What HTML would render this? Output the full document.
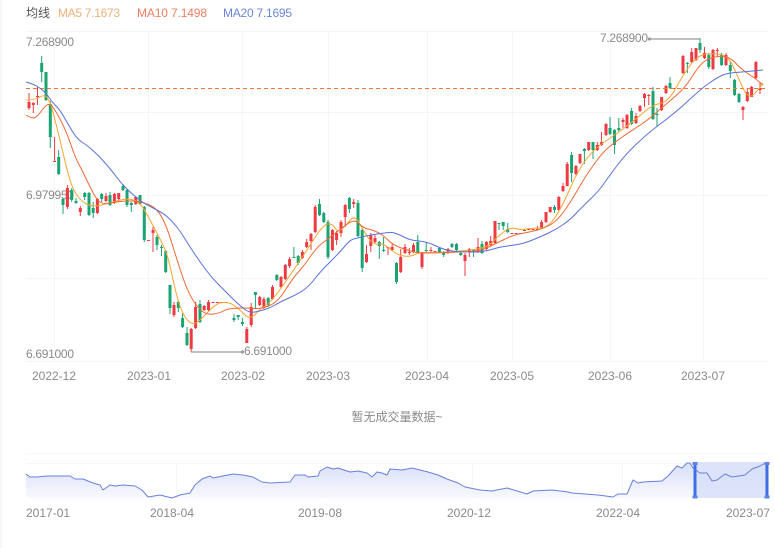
<!DOCTYPE html>
<html><head><meta charset="utf-8">
<style>
html,body{margin:0;padding:0;background:#fff;width:775px;height:548px;overflow:hidden}
svg{display:block;filter:blur(.3px)}
text{font-family:"Liberation Sans","Noto Sans CJK SC",sans-serif;font-size:12px;fill:#8a8a8a}
</style></head><body>
<svg width="775" height="548" viewBox="0 0 775 548" xmlns="http://www.w3.org/2000/svg">
<defs>
<linearGradient id="a" x1="0" y1="0" x2="0" y2="1"><stop offset="0" stop-color="#c9d3f5"/><stop offset="1" stop-color="#f7f8fe"/></linearGradient>
<linearGradient id="s" x1="0" y1="0" x2="0" y2="1"><stop offset="0" stop-color="#d6def9"/><stop offset="1" stop-color="#d9e0f9"/></linearGradient>
</defs>
<rect x="0" y="0" width="2" height="548" fill="#f8f8f8"/>
<path d="M26 31.5H768M26 112.5H768M26 195.5H768M26 278.5H768M26 361.5H768M54.5 31V361M148.5 31V361M242.5 31V361M328.5 31V361M427.5 31V361M512.5 31V361M610.5 31V361M703.5 31V361" stroke="#f5f5f5" fill="none"/>

<text x="26" y="17" style="fill:#555">均线</text>
<text x="58" y="17" textLength="62" style="fill:#edb27c">MA5 7.1673</text>
<text x="137" y="17" textLength="70" style="fill:#ee7f5f">MA10 7.1498</text>
<text x="223" y="17" textLength="69" style="fill:#6d86dc">MA20 7.1695</text>

<text x="26" y="46" textLength="48">7.268900</text>
<text x="26" y="199" textLength="48">6.979950</text>
<text x="26" y="358" textLength="48">6.691000</text>

<g stroke="#ee3b43" stroke-width="1" fill="none">
<path d="M29 93V110M33.3 102V113M37.5 87V105M54.6 137V162M67.4 185V209M80.3 206V216M97.4 198V214M106 193V202M114.4 193V204M118.7 193V202M135.8 196V205M148.6 240V241M153 227V252M174 302V317M191.2 328V352M195.6 302V329M204.2 305V311M208.5 300V311M246.8 327V343M251.2 303V327M259.7 296V306M263.9 297V309M272.5 285V300M281 276V288M285.3 264V280M289.6 257V268M302.4 250V259M306.7 239V248M311 233V250M315.2 205V233M332.4 229V251M336.6 231V245M341 220V237M345.2 204V227M353.7 199V208M366.5 245V263M370.8 233V252M375 235V243M388 247V255M392.2 244V251M400.7 249V273M405 244V254M409.3 248V255M413.5 243V253M422 252V269M431 247V252M435 251V252M448 248V254M465 253V276M469.3 248V257M478 238V253M486.4 241V250M490.7 236V246M495 221V244M512 233V234M516.2 233V234M520.5 233V234M524.5 229V231M528.8 229V230M533 229V230M537.4 226V230M541.6 220V229M546 212V223M550.2 207V213M558.8 196V211M563 183V192M567.2 162V186M575.9 165V175M580 154V164M588.7 142V151M597.3 142V151M601.6 132V146M606 123V136M623 118V128M627 114V129M636 113V124M640 105V112M644.5 93V107M648.8 94V105M661.6 97V111M666 85V94M683 55V74M691.7 48V63M696 48V61M704.5 47V59M713 49V70M717.3 48V57M726 53V66M743 106V120M747.3 88V102M751.6 86V97M755.9 61V79M760 82V94"/>
</g>
<g stroke="#ee3b43" stroke-width="3" fill="none">
<path d="M29 102V108M33.3 103V105M37.5 96V97M54.6 161V162M67.4 188V207M80.3 208V212M97.4 199V213M106 196V201M114.4 194V203M118.7 193V199M135.8 197V204M148.6 240V241M153 230V233M174 305V315M191.2 329V349M195.6 307V328M204.2 306V310M208.5 302V310M213 302V303M217.3 302V303M221.6 302V303M225.8 302V303M246.8 329V343M251.2 307V325M259.7 297V305M263.9 299V308M272.5 287V299M281 277V287M285.3 265V279M289.6 259V266M302.4 252V258M306.7 242V247M311 234V241M315.2 207V232M332.4 230V250M336.6 233V240M341 222V233M345.2 205V217M353.7 202V204M366.5 254V262M370.8 235V246M375 238V242M388 247V248M392.2 247V250M400.7 257V272M405 247V253M409.3 252V253M413.5 245V252M422 253V267M431 250V251M435 251V252M448 249V252M465 255V261M469.3 249V252M478 247V252M486.4 242V249M490.7 241V245M495 221V243M512 233V234M516.2 233V234M520.5 233V234M524.5 230V231M528.8 229V230M533 229V230M537.4 229V230M541.6 222V228M546 212V222M550.2 207V212M558.8 197V210M563 186V191M567.2 164V186M575.9 166V174M580 154V163M588.7 142V150M597.3 145V150M601.6 142V145M606 124V135M623 120V122M627 115V128M636 116V123M640 106V111M644.5 94V98M648.8 95V96M661.6 97V110M666 86V93M674 88V89M683 56V73M691.7 52V62M696 48V60M704.5 53V58M713 50V69M717.3 50V51M726 55V65M743 107V110M747.3 92V101M751.6 87V97M755.9 62V78M760 88V90"/>
</g>
<g stroke="#1ba471" stroke-width="1" fill="none">
<path d="M41.7 56V82M46 72V101M50.3 101V148M58.7 150V175M63 198V214M71.7 188V202M76 198V204M84.7 192V200M89 192V216M93.2 202V218M101.7 193V202M110 192V206M123 184V191M127 189V207M131.3 202V212M140 195V205M144.3 206V242M157 235V250M161.5 245V256M165.7 250V273M170 285V314M178.3 300V312M182.6 313V328M187 327V346M200 300V323M234 314V322M238.2 315V320M242.4 318V326M255.4 292V308M268.2 297V307M276.8 274V281M293.9 247V258M298.2 255V265M319.5 199V216M323.8 212V223M328 220V259M349.4 197V213M358 200V237M362.2 228V272M379.3 241V259M383.6 237V252M396.5 262V284M417.8 235V254M426.2 242V252M439.4 248V253M443.7 251V257M452 243V248M456.5 243V252M460.8 252V256M473.6 250V257M482 241V254M499 223V230M503.2 222V230M507.7 223V233M554.5 205V213M571.6 152V182M584.4 148V164M593 142V159M610 117V135M614.5 129V154M618.8 118V132M631.6 108V125M653 87V120M657 108V127M670 77V89M687.4 62V73M700 38V53M708.8 53V69M721.6 53V66M730.3 62V78M734.6 79V96M739 93V103"/>
</g>
<g stroke="#1ba471" stroke-width="3" fill="none">
<path d="M41.7 63V72M46 72V100M50.3 104V137M58.7 157V174M63 199V205M71.7 190V200M76 201V203M84.7 193V197M89 193V215M93.2 208V213M101.7 194V199M110 195V205M123 186V190M127 190V205M131.3 203V205M140 195V204M144.3 207V240M157 237V245M161.5 247V248M165.7 251V272M170 285V308M178.3 302V308M182.6 318V327M187 333V345M200 304V322M234 318V320M238.2 315V317M242.4 322V324M255.4 292V295M268.2 298V305M276.8 275V280M293.9 257V258M298.2 256V263M319.5 204V215M323.8 213V222M328 222V257M349.4 198V209M358 203V236M362.2 230V268M379.3 242V246M383.6 250V251M396.5 263V282M417.8 242V253M426.2 250V251M439.4 248V252M443.7 252V255M452 244V247M456.5 244V250M460.8 253V255M473.6 250V252M482 244V253M499 223V224M503.2 222V226M507.7 229V232M554.5 207V210M571.6 155V173M584.4 149V151M593 142V150M610 128V134M614.5 130V145M618.8 128V130M631.6 111V124M653 91V119M657 114V115M670 83V88M687.4 63V64M700 43V50M708.8 55V67M721.6 55V65M730.3 65V71M734.6 80V95M739 94V102"/>
</g>

<path d="M26 88.5H768" stroke="#ea7a3c" stroke-width="1" stroke-dasharray="4 3" fill="none"/>

<path d="M26 100Q35 100 40 97Q45 94 47.5 98Q50 102 51.5 107Q53 112 56.5 126Q60 140 63.5 155Q67 170 70 180Q73 190 77.5 196Q82 202 87.5 204.5Q93 207 101.5 205Q110 203 118.5 200.5Q127 198 133.5 200Q140 202 145 211Q150 220 154 227.5Q158 235 162.5 244Q167 253 169.5 264Q172 275 174.5 286Q177 297 179.5 304.5Q182 312 184.5 316Q187 320 189.5 322Q192 324 194.5 323.5Q197 323 202 318Q207 313 212 308Q217 303 223.5 302.5Q230 302 235 306Q240 310 245 315Q250 320 255 314.5Q260 309 265 306Q270 303 278.5 291.5Q287 280 297 265Q307 250 315 237.5Q323 225 327.5 224Q332 223 335 228Q338 233 342.5 228.5Q347 224 351 219.5Q355 215 359 222.5Q363 230 368 237.5Q373 245 378 244Q383 243 390 249Q397 255 403.5 256Q410 257 415 254.5Q420 252 428.5 252.5Q437 253 448.5 252Q460 251 473.5 249.5Q487 248 492 242.5Q497 237 503.5 232Q510 227 515 228.5Q520 230 526 229Q532 228 540 228Q548 228 555 217.5Q562 207 570 188.5Q578 170 586.5 159Q595 148 605 141.5Q615 135 625 127.5Q635 120 643.5 112.5Q652 105 660 103.5Q668 102 675 89.5Q682 77 688.5 67.5Q695 58 701 55.5Q707 53 717.5 54Q728 55 733 66Q738 77 742.5 87Q747 97 751 96Q755 95 763 83" stroke="#f5a62e" fill="none"/>
<path d="M26 115Q32 119 35 117.5Q38 116 41 111.5Q44 107 47 105Q50 103 53.5 108Q57 113 62 123Q67 133 71 145Q75 157 79 164.5Q83 172 86.5 179.5Q90 187 93.5 193.5Q97 200 100 202Q103 204 106.5 203.5Q110 203 116.5 202Q123 201 131.5 201Q140 201 148.5 204.5Q157 208 162 217.5Q167 227 172 243.5Q177 260 182 275Q187 290 192 298.5Q197 307 202 311Q207 315 213.5 314Q220 313 223.5 311Q227 309 232 308.5Q237 308 243.5 308Q250 308 255 308.5Q260 309 268.5 306Q277 303 285 290.5Q293 278 298 272.5Q303 267 310 257Q317 247 322.5 243Q328 239 335.5 233Q343 227 349 223Q355 219 359 223.5Q363 228 368 229Q373 230 378 232.5Q383 235 388 240Q393 245 400 247.5Q407 250 412 251.5Q417 253 427 253Q437 253 448.5 252.5Q460 252 470 251.5Q480 251 486.5 248Q493 245 503 240Q513 235 521.5 233.5Q530 232 537.5 230Q545 228 551.5 224Q558 220 565 210Q572 200 578.5 188.5Q585 177 593.5 165Q602 153 608.5 147.5Q615 142 621.5 137.5Q628 133 638 126.5Q648 120 656.5 112.5Q665 105 675 96.5Q685 88 691.5 77.5Q698 67 703 62.5Q708 58 718 56.5Q728 55 735 62.5Q742 70 748.5 74Q755 78 763 85" stroke="#ee6a35" fill="none"/>
<path d="M26 82Q33 84 36.5 86Q40 88 43 90.5Q46 93 49 97.5Q52 102 56 106Q60 110 64 117Q68 124 72.5 131.5Q77 139 82.5 142.5Q88 146 94 151.5Q100 157 106 164Q112 171 116.5 177Q121 183 125.5 187.5Q130 192 133.5 195Q137 198 141 201Q145 204 154 208.5Q163 213 167.5 217Q172 221 176 226Q180 231 185 239Q190 247 195 254.5Q200 262 206 270Q212 278 218.5 284.5Q225 291 232.5 298.5Q240 306 245 309.5Q250 313 255 312Q260 311 265 309.5Q270 308 275 305Q280 302 290 297.5Q300 293 305 289Q310 285 315 278.5Q320 272 330 262Q340 252 345 246Q350 240 353.5 239Q357 238 363.5 236.5Q370 235 377.5 234Q385 233 388.5 232.5Q392 232 396 233.5Q400 235 405 237.5Q410 240 415 240.5Q420 241 425 242Q430 243 435 245.5Q440 248 445 249.5Q450 251 457.5 251.5Q465 252 472.5 252Q480 252 485 251Q490 250 495 248.5Q500 247 507.5 246Q515 245 520 244Q525 243 532.5 240Q540 237 547.5 233.5Q555 230 562.5 225Q570 220 576 213.5Q582 207 590 199.5Q598 192 604 183.5Q610 175 617.5 165Q625 155 636.5 144Q648 133 661.5 123Q675 113 688.5 100.5Q702 88 710 82.5Q718 77 723 75Q728 73 735 72.5Q742 72 752.5 71L763 70" stroke="#5a72d8" fill="none"/>

<path d="M191 352H242" stroke="#aaa" stroke-width="1.5" fill="none"/>
<circle cx="242.5" cy="352" r="1.6" fill="#999"/>
<text x="244" y="355" textLength="48">6.691000</text>
<path d="M650 39H700" stroke="#aaa" stroke-width="1.5" fill="none"/>
<circle cx="649.5" cy="39" r="1.6" fill="#999"/>
<text x="600" y="42" textLength="48">7.268900</text>

<g text-anchor="middle">
<text x="54" y="380">2022-12</text>
<text x="149" y="380">2023-01</text>
<text x="243" y="380">2023-02</text>
<text x="328" y="380">2023-03</text>
<text x="427" y="380">2023-04</text>
<text x="512" y="380">2023-05</text>
<text x="610" y="380">2023-06</text>
<text x="703" y="380">2023-07</text>
<text x="397" y="421">暂无成交量数据~</text>
</g>

<path d="M26 453.5H768" stroke="#f7f7f7" fill="none"/>
<path d="M26 463.5H768M176.5 463V498M324.5 463V498M472.5 463V498M622.5 463V498" stroke="#f6f6f6" fill="none"/>
<path d="M26 474L30 477L37 477L47 476L57 476L70 476L75 479L83 479L93 483L100 485L103 490L110 485L115 486L123 485L135 486L142 490L148 497L160 495L172 498L180 495L190 493L195 485L202 479L210 476L213 478L233 474L243 475L253 477L262 482L270 483L290 482L295 475L305 475L308 477L318 476L320 471L327 467L333 469L338 468L350 472L358 471L367 473L372 477L377 472L382 473L387 475L390 469L402 470L412 468L428 472L438 475L447 479L458 483L465 487L480 490L492 491L507 488L527 494L533 491L552 490L568 492L572 493L598 495L613 497L618 494L627 494L633 480L638 483L643 482L662 481L668 476L677 466L682 468L687 463L690 463L693 468L700 473L707 473L712 481L717 480L725 474L732 477L745 475L752 469L760 466L767 462V498H26Z" fill="url(#a)" fill-opacity=".75"/>
<rect x="695" y="462" width="72" height="36" fill="url(#s)" fill-opacity=".85"/>
<path d="M26 474L30 477L37 477L47 476L57 476L70 476L75 479L83 479L93 483L100 485L103 490L110 485L115 486L123 485L135 486L142 490L148 497L160 495L172 498L180 495L190 493L195 485L202 479L210 476L213 478L233 474L243 475L253 477L262 482L270 483L290 482L295 475L305 475L308 477L318 476L320 471L327 467L333 469L338 468L350 472L358 471L367 473L372 477L377 472L382 473L387 475L390 469L402 470L412 468L428 472L438 475L447 479L458 483L465 487L480 490L492 491L507 488L527 494L533 491L552 490L568 492L572 493L598 495L613 497L618 494L627 494L633 480L638 483L643 482L662 481L668 476L677 466L682 468L687 463L690 463L693 468L700 473L707 473L712 481L717 480L725 474L732 477L745 475L752 469L760 466L767 462" stroke="#6a80dc" fill="none" stroke-linejoin="round"/>
<path d="M695 462V498M767 462V498" stroke="#3f6de3" stroke-width="3" fill="none"/>
<path d="M692.5 462h5v3h-5zM692.5 495.5h5v3h-5zM764.5 462h5v3h-5zM764.5 495.5h5v3h-5z" fill="#5c83e6"/>

<text x="26" y="517">2017-01</text>
<text x="172" y="517" text-anchor="middle">2018-04</text>
<text x="320" y="517" text-anchor="middle">2019-08</text>
<text x="469" y="517" text-anchor="middle">2020-12</text>
<text x="618" y="517" text-anchor="middle">2022-04</text>
<text x="770" y="517" text-anchor="end">2023-07</text>
</svg>
</body></html>
